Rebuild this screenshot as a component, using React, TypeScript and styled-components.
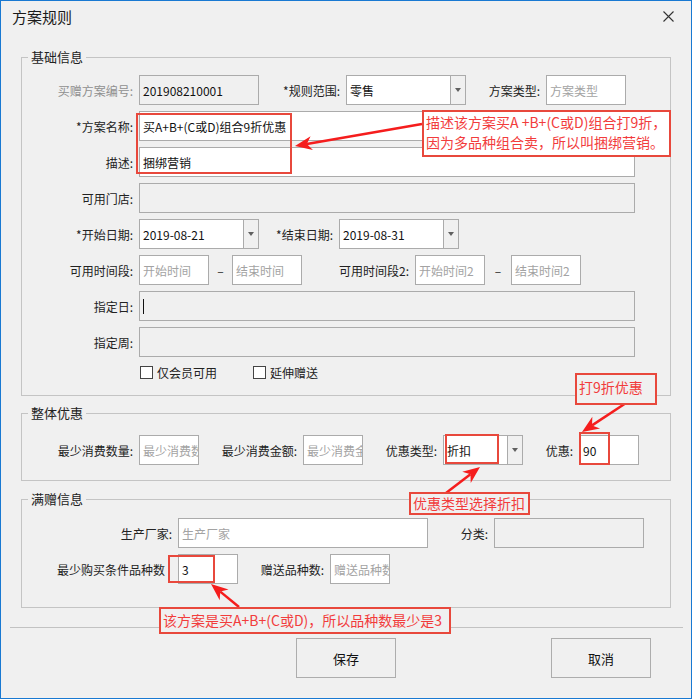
import React from "react";
import styled, { createGlobalStyle } from "styled-components";

const GlobalStyle = createGlobalStyle`
  html, body {
    margin: 0;
    padding: 0;
    background: #f0f0f0;
  }
  * {
    box-sizing: border-box;
  }
`;

const FONT = `"Noto Sans CJK SC", "Microsoft YaHei", sans-serif`;

const Window = styled.div`
  position: relative;
  width: 692px;
  height: 699px;
  border: 1px solid #1979d2;
  background: #f0f0f0;
  font-family: ${FONT};
  font-size: 12px;
  color: #222;
  overflow: hidden;
`;

const TitleBar = styled.div`
  height: 30px;
  display: flex;
  align-items: center;
  justify-content: space-between;
  padding: 0 17px 0 11px;
`;

const Title = styled.span`
  font-size: 15px;
  color: #1a1a1a;
`;

const Body = styled.div`
  padding: 17px 0 0 20px;
`;

interface IGroupProps {
  $mt: number;
  $pt: number;
  $pb: number;
}

const Group = styled.fieldset<IGroupProps>`
  width: 650px;
  min-width: 0;
  margin: ${(p) => p.$mt}px 0 0 0;
  padding: ${(p) => p.$pt}px 0 ${(p) => p.$pb}px 0;
  border: 1px solid #c4c4c4;
`;

const Legend = styled.legend`
  margin-left: 6px;
  padding: 0 3px;
  font-size: 13px;
  line-height: 18px;
  color: #222;
`;

const Rows = styled.div`
  display: flex;
  flex-direction: column;
  gap: 6px;
`;

const Row = styled.div`
  display: flex;
  align-items: center;
  height: 30px;
`;

const Label = styled.span<{ $w: number; $pr?: number; $muted?: boolean }>`
  width: ${(p) => p.$w}px;
  flex-shrink: 0;
  padding-right: ${(p) => p.$pr ?? 6}px;
  text-align: right;
  white-space: nowrap;
  color: ${(p) => (p.$muted ? "#8f8f8f" : "#222")};
`;

const Box = styled.div<{ $w: number; $grey?: boolean }>`
  width: ${(p) => p.$w}px;
  height: 30px;
  flex-shrink: 0;
  border: 1px solid #ababab;
  background: ${(p) => (p.$grey ? "#f0f0f0" : "#fff")};
  padding: 0 3px;
  display: flex;
  align-items: center;
  white-space: nowrap;
  overflow: hidden;
  color: #111;
`;

const Hint = styled.span`
  color: #a3a3a3;
`;

const Caret = styled.span`
  width: 1px;
  height: 15px;
  background: #111;
`;

const ComboFrame = styled.div<{ $w: number }>`
  width: ${(p) => p.$w}px;
  height: 30px;
  flex-shrink: 0;
  border: 1px solid #ababab;
  background: #fff;
  display: flex;
`;

const ComboValue = styled.div`
  flex: 1;
  padding: 0 3px;
  display: flex;
  align-items: center;
  color: #111;
`;

const ComboButton = styled.div`
  width: 15px;
  border-left: 1px solid #ababab;
  background: #f0f0f0;
  display: flex;
  align-items: center;
  justify-content: center;
  &::after {
    content: "";
    border-left: 3.5px solid transparent;
    border-right: 3.5px solid transparent;
    border-top: 4px solid #606060;
  }
`;

const Dash = styled.span<{ $w: number }>`
  width: ${(p) => p.$w}px;
  flex-shrink: 0;
  text-align: center;
  color: #222;
`;

const CheckRow = styled.div`
  display: flex;
  align-items: center;
  height: 19px;
  padding-left: 118px;
`;

const CheckItem = styled.label<{ $mr?: number }>`
  display: flex;
  align-items: center;
  gap: 4px;
  margin-right: ${(p) => p.$mr ?? 0}px;
  white-space: nowrap;
`;

const CheckBox = styled.span`
  width: 13px;
  height: 13px;
  border: 1px solid #444;
  background: #fff;
`;

const Separator = styled.div`
  width: 673px;
  margin: 19px 0 0 -11px;
  border-top: 1px solid #c2c2c2;
`;

const ButtonRow = styled.div`
  display: flex;
  gap: 155px;
  margin-top: 10px;
  padding-left: 275px;
`;

const Button = styled.button`
  width: 100px;
  height: 40px;
  border: 1px solid #adadad;
  background: #f0f0f0;
  font-family: ${FONT};
  font-size: 13px;
  color: #111;
`;

/* annotation layer drawn over the dialog */
const Overlay = styled.div`
  position: absolute;
  left: -1px;
  top: -1px;
  width: 692px;
  height: 699px;
  pointer-events: none;
`;

interface IMarkProps {
  $x: number;
  $y: number;
  $w: number;
  $h: number;
  $lh?: number;
  $fill?: string;
}

const Mark = styled.div<IMarkProps>`
  position: absolute;
  left: ${(p) => p.$x}px;
  top: ${(p) => p.$y}px;
  width: ${(p) => p.$w}px;
  height: ${(p) => p.$h}px;
  border: 2px solid #e8483c;
  background: ${(p) => p.$fill ?? "transparent"};
  padding-left: 2px;
  color: #f23c3c;
  font-size: 14px;
  line-height: ${(p) => p.$lh ?? 20}px;
  white-space: nowrap;
`;

const ArrowLayer = styled.svg`
  position: absolute;
  left: 0;
  top: 0;
`;

function Combo({ w, value }: { w: number; value: string }) {
  return (
    <ComboFrame $w={w}>
      <ComboValue>{value}</ComboValue>
      <ComboButton />
    </ComboFrame>
  );
}

const arrows = [
  [422, 124, 295, 146],
  [626, 403, 582, 432],
  [446, 493, 480, 467],
  [239, 607, 211, 584],
];

function Arrow({ a }: { a: number[] }) {
  const [x1, y1, x2, y2] = a;
  const len = Math.hypot(x2 - x1, y2 - y1);
  const dx = (x2 - x1) / len;
  const dy = (y2 - y1) / len;
  const bx = x2 - dx * 17;
  const by = y2 - dy * 17;
  const nx = x2 - dx * 12;
  const ny = y2 - dy * 12;
  const pts = [
    [x2, y2],
    [bx - dy * 7, by + dx * 7],
    [nx, ny],
    [bx + dy * 7, by - dx * 7],
  ]
    .map((p) => p.join(","))
    .join(" ");
  return (
    <g>
      <line x1={x1} y1={y1} x2={nx} y2={ny} stroke="#f51d1d" strokeWidth={2.5} />
      <polygon points={pts} fill="#f51d1d" />
    </g>
  );
}

export default function App() {
  return (
    <>
      <GlobalStyle />
      <Window>
        <TitleBar>
          <Title>方案规则</Title>
          <svg width="11" height="11" viewBox="0 0 11 11">
            <path d="M0.5 0.5 L10.5 10.5 M10.5 0.5 L0.5 10.5" stroke="#333" strokeWidth="1.1" />
          </svg>
        </TitleBar>
        <Body>
          <Group $mt={0} $pt={9} $pb={13}>
            <Legend>基础信息</Legend>
            <Rows>
              <Row>
                <Label $w={117} $muted>
                  买赠方案编号:
                </Label>
                <Box $w={120} $grey>
                  201908210001
                </Box>
                <Label $w={87}>*规则范围:</Label>
                <Combo w={120} value="零售" />
                <Label $w={80}>方案类型:</Label>
                <Box $w={80}>
                  <Hint>方案类型</Hint>
                </Box>
              </Row>
              <Row>
                <Label $w={117}>*方案名称:</Label>
                <Box $w={496}>买A+B+(C或D)组合9折优惠</Box>
              </Row>
              <Row>
                <Label $w={117}>描述:</Label>
                <Box $w={496}>捆绑营销</Box>
              </Row>
              <Row>
                <Label $w={117}>可用门店:</Label>
                <Box $w={496} $grey />
              </Row>
              <Row>
                <Label $w={117}>*开始日期:</Label>
                <Combo w={120} value="2019-08-21" />
                <Label $w={80}>*结束日期:</Label>
                <Combo w={120} value="2019-08-31" />
              </Row>
              <Row>
                <Label $w={117}>可用时间段:</Label>
                <Box $w={70}>
                  <Hint>开始时间</Hint>
                </Box>
                <Dash $w={23}>–</Dash>
                <Box $w={70}>
                  <Hint>结束时间</Hint>
                </Box>
                <Label $w={113}>可用时间段2:</Label>
                <Box $w={70}>
                  <Hint>开始时间2</Hint>
                </Box>
                <Dash $w={26}>–</Dash>
                <Box $w={70}>
                  <Hint>结束时间2</Hint>
                </Box>
              </Row>
              <Row>
                <Label $w={117}>指定日:</Label>
                <Box $w={496} $grey>
                  <Caret />
                </Box>
              </Row>
              <Row>
                <Label $w={117}>指定周:</Label>
                <Box $w={496} $grey />
              </Row>
              <CheckRow>
                <CheckItem $mr={36}>
                  <CheckBox />
                  仅会员可用
                </CheckItem>
                <CheckItem>
                  <CheckBox />
                  延伸赠送
                </CheckItem>
              </CheckRow>
            </Rows>
          </Group>

          <Group $mt={8} $pt={13} $pb={15}>
            <Legend>整体优惠</Legend>
            <Rows>
              <Row>
                <Label $w={117}>最少消费数量:</Label>
                <Box $w={60}>
                  <Hint>最少消费数量</Hint>
                </Box>
                <Label $w={104}>最少消费金额:</Label>
                <Box $w={60}>
                  <Hint>最少消费金额</Hint>
                </Box>
                <Label $w={80}>优惠类型:</Label>
                <Combo w={80} value="折扣" />
                <Label $w={56}>优惠:</Label>
                <Box $w={60}>90</Box>
              </Row>
            </Rows>
          </Group>

          <Group $mt={9} $pt={10} $pb={23}>
            <Legend>满赠信息</Legend>
            <Rows>
              <Row>
                <Label $w={156}>生产厂家:</Label>
                <Box $w={250}>
                  <Hint>生产厂家</Hint>
                </Box>
                <Label $w={66}>分类:</Label>
                <Box $w={150} $grey />
              </Row>
              <Row>
                <Label $w={156} $pr={13}>
                  最少购买条件品种数
                </Label>
                <Box $w={60}>3</Box>
                <Label $w={92}>赠送品种数:</Label>
                <Box $w={60}>
                  <Hint>赠送品种数</Hint>
                </Box>
              </Row>
            </Rows>
          </Group>

          <Separator />
          <ButtonRow>
            <Button type="button">保存</Button>
            <Button type="button">取消</Button>
          </ButtonRow>
        </Body>

        <Overlay>
          <ArrowLayer width="692" height="699">
            {arrows.map((a, i) => (
              <Arrow key={i} a={a} />
            ))}
          </ArrowLayer>
          <Mark $x={136} $y={113} $w={156} $h={61} />
          <Mark $x={422} $y={110} $w={249} $h={47} $fill="#fff">
            描述该方案买A +B+(C或D)组合打9折，
            <br />
            因为多品种组合卖，所以叫捆绑营销。
          </Mark>
          <Mark $x={575} $y={373} $w={82} $h={32} $lh={25} $fill="#f0f0f0">
            打9折优惠
          </Mark>
          <Mark $x={445} $y={434} $w={54} $h={30} />
          <Mark $x={579} $y={432} $w={31} $h={33} />
          <Mark $x={409} $y={492} $w={121} $h={23} $lh={18} $fill="#f0f0f0">
            优惠类型选择折扣
          </Mark>
          <Mark $x={168} $y={555} $w={47} $h={28} />
          <Mark $x={159} $y={607} $w={292} $h={27} $lh={22} $fill="#f0f0f0">
            该方案是买A+B+(C或D)，所以品种数最少是3
          </Mark>
        </Overlay>
      </Window>
    </>
  );
}
